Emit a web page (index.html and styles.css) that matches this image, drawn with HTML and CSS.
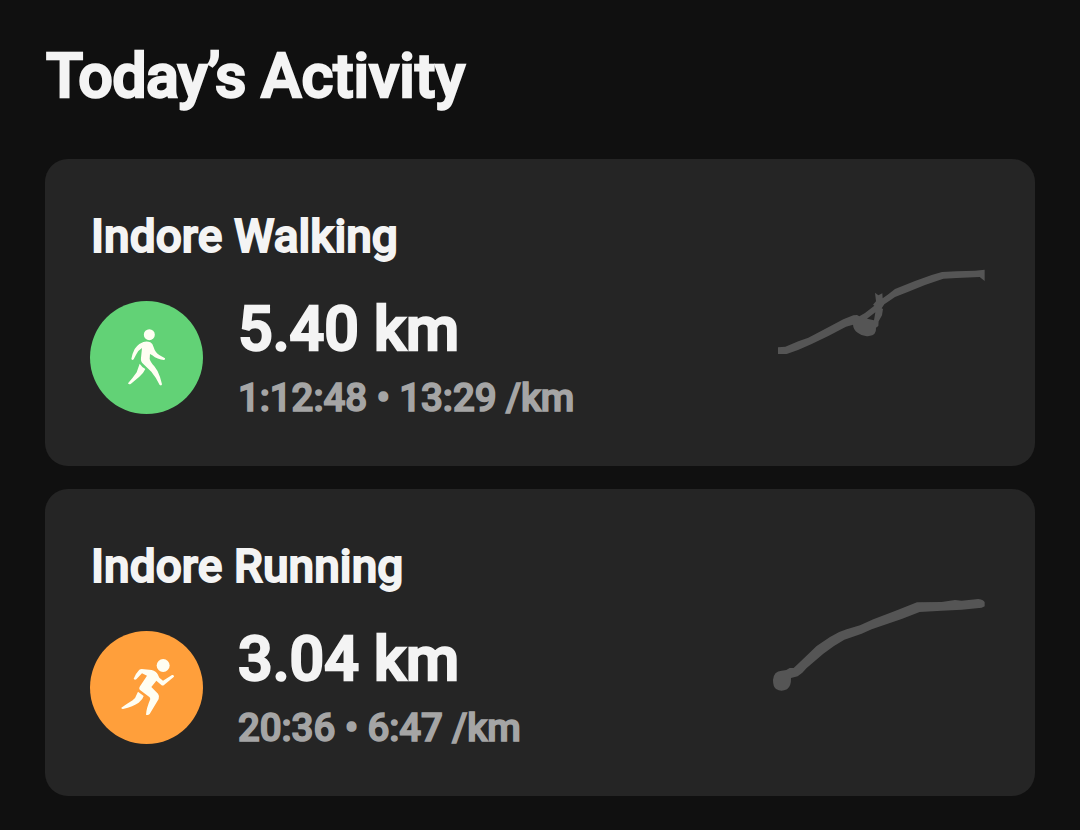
FILE: index.html
```html
<!DOCTYPE html>
<html lang="en">
	<head>
		<meta charset="UTF-8" />
		<meta name="viewport" content="width=device-width, initial-scale=1.0" />
		<title>Today’s Activity</title>

		<link rel="stylesheet" href="styles.css">
	</head>
	<body>
		<div class="main">
			<h1><span class="today">Today’s</span> Activity</h1>
			<div class="cards">
				<div class="card">
					<div class="info">
						<h2>Indore Walking</h2>
						<div class="row">
							<svg class="icon walking" viewBox="30 33 339 339">
								<circle cx="208" cy="134" r="16.5" />
								<path d="M190 156 Q202 153 211 157 Q218 160 221 172 Q225 187 239 196 L255 205 Q257 209 252 210 Q232 209 217 196 L210 192 L209 207 Q211 216 223 229 Q234 242 240 261 L246 283 Q245 288 239 285 Q229 263 214 245 L190 222 Q181 214 183 203 L186 174 Q173 182 169 193 L161 208 Q157 212 154 207 Q157 190 164 177 Q169 169 178 162 Z" />
								<path d="M179 221 Q186 232 196 237 Q191 249 178 260 L153 281 Q147 285 144 280 Q160 262 170 247 Z" />
							</svg>
							<div class="stats">
								<div class="distance">5.40 km</div>
								<div class="pace">1:12:48 • 13:29 /km</div>
							</div>
						</div>
					</div>
					<svg class="route" viewBox="0 12 690 339">
						<path d="M39 277 L61 275 L100 259 L130 248 L170 227 L235 193 L265 181 L276 180 L283 184 L300 174 L328 152 L324 149 L333 139 L330 113 L340 121 L352 115 L353 130 L368 119 L390 102 L450 78 L500 60 L531 51 L575 49 L630 47 L659 44 L659 78 L644 66 L575 69 L535 71 L480 90 L430 110 L390 126 L358 148 L350 160 L354 162 L351 181 L341 199 L340 213 L333 218 Q335 240 312 243 Q294 246 278 233 Q265 225 264 209 L243 215 L190 243 L140 267 L99 285 L65 297 L39 297 Z M331 172 L306 191 L327 196 Z" />
					</svg>
				</div>
				<div class="card">
					<div class="info">
						<h2>Indore Running</h2>
						<div class="row">
							<svg class="icon running" viewBox="30 33 339 339">
								<circle cx="249.5" cy="136.5" r="19.5" />
								<path d="M185 147 L215 150 Q229 154 233 163 L238 173 L249 182 L276 165 Q283 164 282 170 L252 195 Q248 198 244 195 L229 182 L214 201 L234 221 Q239 227 236 237 L209 282 Q204 287 198 284 Q199 265 211 237 L209 232 L181 211 Q175 207 180 199 L201 167 L186 160 L169 178 Q164 181 161 176 Q168 159 178 149 Q181 147 185 147 Z" />
								<path d="M174 215 L191 228 Q189 238 176 248 Q160 259 129 267 Q124 267 124 263 Q142 251 158 241 Q166 237 169 226 Z" />
							</svg>
							<div class="stats">
								<div class="distance">3.04 km</div>
								<div class="pace">20:36 • 6:47 /km</div>
							</div>
						</div>
					</div>
					<svg class="route" viewBox="0 -3 690 339">
						<path d="M24 270 Q26 243 50 242 L64 240 L74 234 L86 234 L105 216 L155 168 L195 141 Q220 125 245 118 L285 106 L325 88 L390 63 L456 37 L530 36 L570 30 L590 32 L640 27 Q657 30 659 37 L659 49 L650 53 L590 59 L530 62 L464 66 L410 87 L320 118 L290 131 L238 149 Q205 167 175 191 L125 234 L112 248 L98 259 L78 264 Q79 288 66 298 Q48 307 33 297 Q24 290 24 270 Z" />
					</svg>
				</div>
			</div>
		</div>
	</body>
</html>
```

FILE: styles.css
```css
body {
	margin: 0;
	background-color: #101010;
	color: #f4f4f4;
	font-family: Roboto, "Liberation Sans", sans-serif;
	font-weight: 500;
}

.main {
	padding: 41px 45px 34px;
}

h1 {
	margin: 0 0 48px;
	padding-left: 1px;
	font-size: 61px;
	line-height: 70px;
	font-weight: 500;
	-webkit-text-stroke: 2.4px currentColor;
}

.today {
	letter-spacing: -0.7px;
}

.cards {
	display: flex;
	flex-direction: column;
	gap: 23px;
}

.card {
	display: flex;
	justify-content: space-between;
	align-items: center;
	padding: 49px 40px 44px 45px;
	border-radius: 23px;
	background-color: #252525;
}

h2 {
	margin: 0 0 29px;
	padding-left: 1px;
	font-size: 46px;
	line-height: 56px;
	font-weight: 500;
	letter-spacing: 0.05px;
	-webkit-text-stroke: 1.8px currentColor;
}

.row {
	display: flex;
	align-items: center;
	gap: 35px;
}

.icon {
	width: 113px;
	height: 113px;
	border-radius: 50%;
	fill: #fffef2;
}

.walking {
	background-color: #62d276;
}

.running {
	background-color: #ff9f3b;
}

.stats {
	display: flex;
	flex-direction: column;
	gap: 9px;
	white-space: nowrap;
}

.distance {
	font-size: 61px;
	line-height: 72px;
	-webkit-text-stroke: 2.4px currentColor;
}

.pace {
	color: #a5a5a5;
	font-size: 38.5px;
	line-height: 48px;
	letter-spacing: -0.1px;
	-webkit-text-stroke: 1.6px currentColor;
}

.route {
	width: 230px;
	height: 113px;
	fill: #555;
	fill-rule: evenodd;
}
```
